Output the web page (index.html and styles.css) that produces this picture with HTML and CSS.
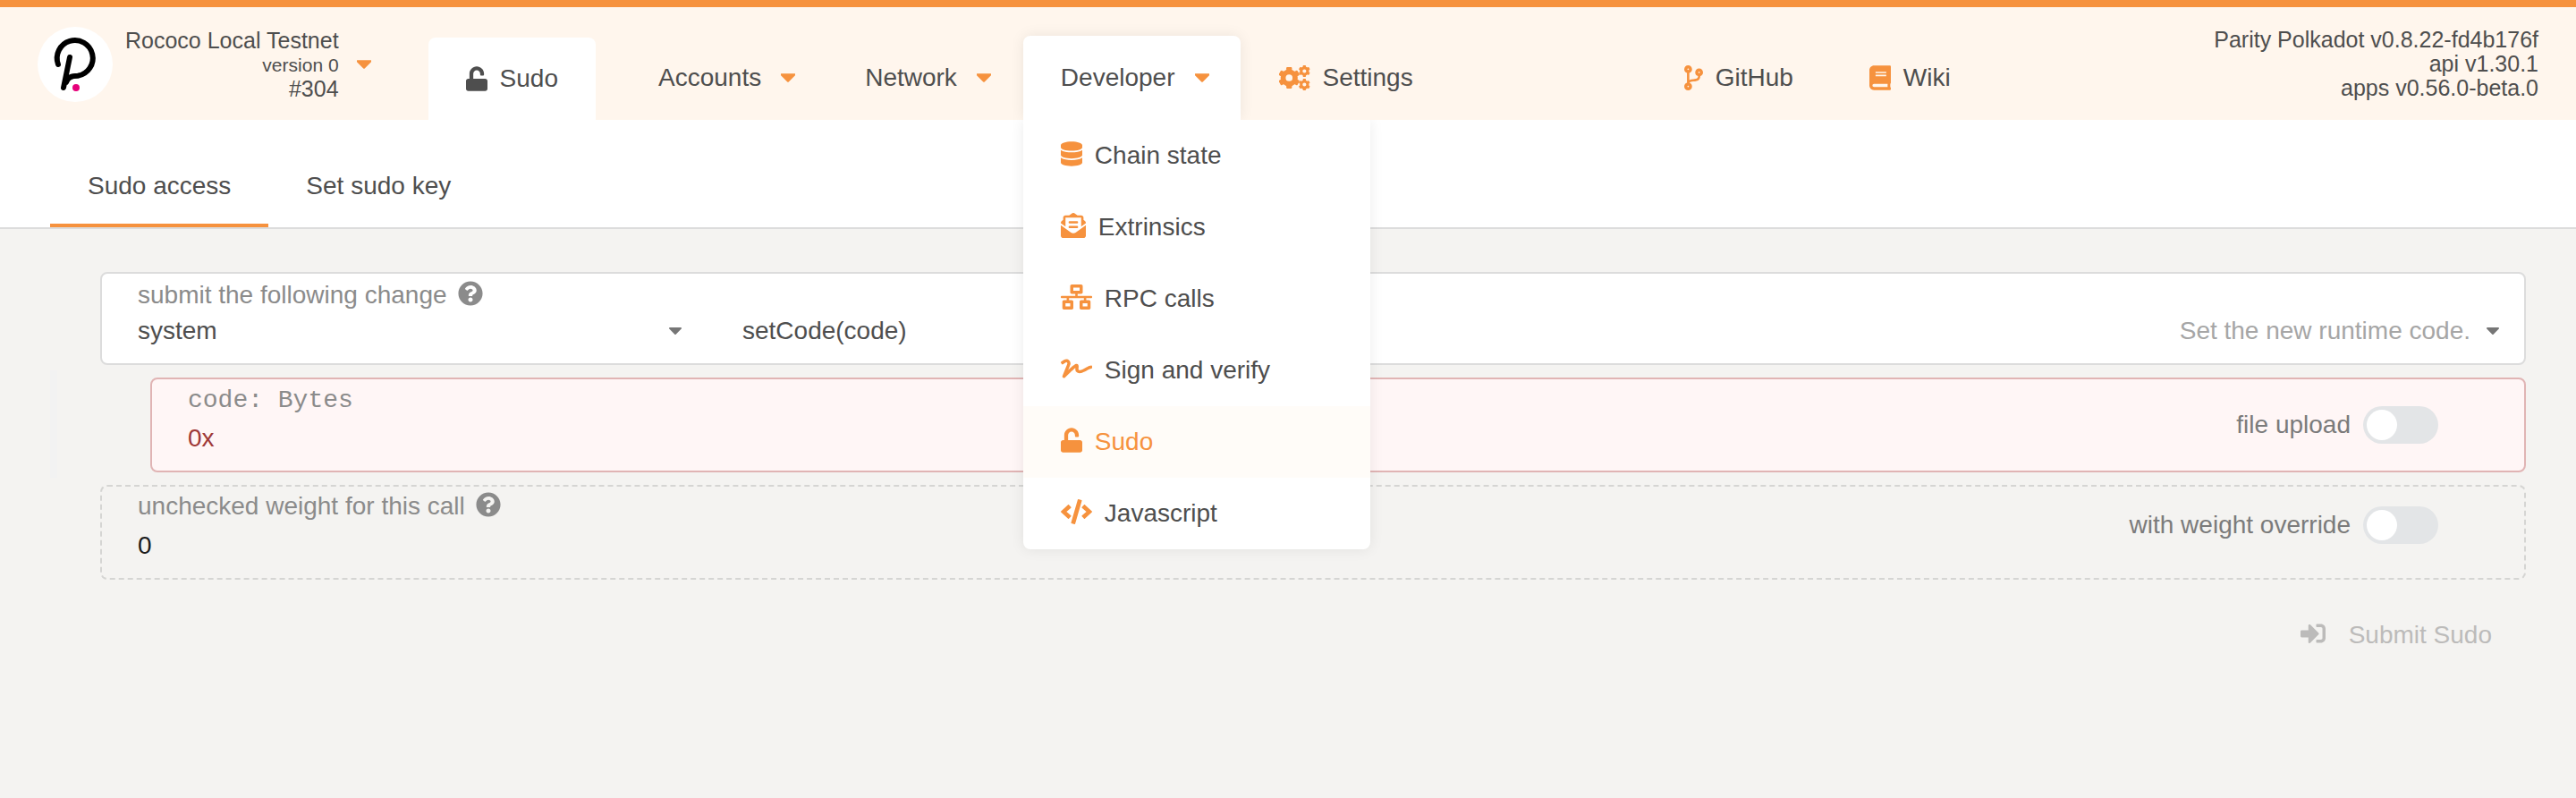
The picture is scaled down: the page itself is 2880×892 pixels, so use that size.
FILE: index.html
```html
<!DOCTYPE html>
<html lang="en">
<head>
<meta charset="utf-8">
<meta name="viewport" content="width=device-width, initial-scale=1">
<title>Sudo</title>
<link rel="stylesheet" href="styles.css">
</head>
<body>
<svg class="sprite" aria-hidden="true">
  <symbol id="i-caret" viewBox="17 192 286 169"><path d="M31.3 192h257.3c17.8 0 26.7 21.5 14.1 34.1L174.1 354.8c-7.8 7.8-20.5 7.8-28.3 0L17.2 226.1C4.6 213.5 13.5 192 31.3 192z"/></symbol>
  <symbol id="i-unlock" viewBox="0 0 448 512"><path d="M400 256H152V152.9c0-39.6 31.7-72.5 71.3-72.9 40-.4 72.7 32.1 72.7 72v16c0 13.3 10.7 24 24 24h32c13.3 0 24-10.7 24-24v-16C376 68 307.5-.3 223.5 0 139.5.3 72 69.5 72 153.5V256H48c-26.5 0-48 21.5-48 48v160c0 26.5 21.5 48 48 48h352c26.5 0 48-21.5 48-48V304c0-26.5-21.5-48-48-48z"/></symbol>
  <symbol id="i-database" viewBox="0 0 448 512"><path d="M448 73.143v45.714C448 159.143 347.667 192 224 192S0 159.143 0 118.857V73.143C0 32.857 100.333 0 224 0s224 32.857 224 73.143zM448 176v102.857C448 319.143 347.667 352 224 352S0 319.143 0 278.857V176c48.125 33.143 136.208 48.572 224 48.572S399.874 209.143 448 176zm0 160v102.857C448 479.143 347.667 512 224 512S0 479.143 0 438.857V336c48.125 33.143 136.208 48.572 224 48.572S399.874 369.143 448 336z"/></symbol>
  <symbol id="i-envelope" viewBox="0 0 512 512"><path d="M176 216h160c8.84 0 16-7.16 16-16v-16c0-8.84-7.16-16-16-16H176c-8.84 0-16 7.16-16 16v16c0 8.84 7.16 16 16 16zm-16 80c0 8.84 7.16 16 16 16h160c8.84 0 16-7.16 16-16v-16c0-8.84-7.16-16-16-16H176c-8.84 0-16 7.16-16 16v16zm96 121.13c-16.42 0-32.84-5.06-46.86-15.19L0 250.86V464c0 26.51 21.49 48 48 48h416c26.51 0 48-21.49 48-48V250.86L302.86 401.94c-14.02 10.12-30.44 15.19-46.86 15.19zm237.61-254.18c-8.85-6.94-17.24-13.47-29.61-22.81V96c0-26.51-21.49-48-48-48h-77.55c-3.04-2.2-5.87-4.26-9.04-6.56C312.6 29.17 279.2-.35 256 0c-23.2-.35-56.59 29.17-73.41 41.44-3.17 2.3-6 4.36-9.04 6.56H96c-26.51 0-48 21.49-48 48v44.14c-12.37 9.33-20.76 15.87-29.61 22.81A47.995 47.995 0 0 0 0 200.72v10.65l96 69.35V96h320v184.72l96-69.35v-10.65c0-14.74-6.78-28.67-18.39-37.77z"/></symbol>
  <symbol id="i-network" viewBox="0 0 640 512"><path d="M640 264v-16c0-8.84-7.16-16-16-16H344v-40h72c17.67 0 32-14.33 32-32V32c0-17.67-14.33-32-32-32H224c-17.67 0-32 14.33-32 32v128c0 17.67 14.33 32 32 32h72v40H16c-8.84 0-16 7.16-16 16v16c0 8.84 7.16 16 16 16h104v40H64c-17.67 0-32 14.33-32 32v128c0 17.67 14.33 32 32 32h160c17.67 0 32-14.33 32-32V352c0-17.67-14.33-32-32-32h-56v-40h304v40h-56c-17.67 0-32 14.33-32 32v128c0 17.67 14.33 32 32 32h160c17.67 0 32-14.33 32-32V352c0-17.67-14.33-32-32-32h-56v-40h104c8.84 0 16-7.16 16-16zM256 128V64h128v64H256zm-64 320H96v-64h96v64zm352 0h-96v-64h96v64z"/></symbol>
  <symbol id="i-signature" viewBox="0 0 640 512"><path d="M623.2 192c-51.8 3.5-125.7 54.7-163.1 71.5-29.1 13.1-54.2 24.4-76.1 24.4-22.6 0-26-16.2-21.3-51.9 1.1-8 11.7-79.2-42.7-76.1-25.1 1.5-64.3 24.8-169.5 126L192 182.2c30.4-75.9-53.2-151.5-129.7-102.8L7.4 116.3C0 121-2.2 130.9 2.5 138.4l17.2 27c4.7 7.5 14.6 9.7 22.1 4.9l58-38.9c18.4-11.7 40.7 7.2 32.7 27.1L34.3 404.1C27.5 421 37 448 64 448c8.3 0 16.5-3.2 22.6-9.4 42.2-42.2 154.7-150.7 211.2-195.8-2.2 28.5-2.1 58.9 20.6 83.8 15.3 16.8 37.3 25.3 65.5 25.3 35.6 0 68-14.6 102.3-30 33-14.8 99-62.6 138.4-65.8 8.5-.7 15.2-7.3 15.2-15.8v-32.1c.2-9.1-7.5-16.8-16.6-16.2z"/></symbol>
  <symbol id="i-code" viewBox="0 0 640 512"><path d="M278.9 511.5l-61-17.7c-6.4-1.8-10-8.5-8.2-14.9L346.2 8.7c1.8-6.4 8.5-10 14.9-8.2l61 17.7c6.4 1.8 10 8.5 8.2 14.9L293.8 503.3c-1.9 6.4-8.5 10.1-14.9 8.2zm-114-112.2l43.5-46.4c4.6-4.9 4.3-12.7-.8-17.2L117 256l90.6-79.7c5.1-4.5 5.5-12.3.8-17.2l-43.5-46.4c-4.5-4.8-12.1-5.1-17-.5L3.8 247.2c-5.1 4.7-5.1 12.8 0 17.5l144.1 135.1c4.9 4.6 12.5 4.4 17-.5zm327.2.6l144.1-135.1c5.1-4.7 5.1-12.8 0-17.5L492.1 112.1c-4.8-4.5-12.4-4.3-17 .5L431.6 159c-4.6 4.9-4.3 12.7.8 17.2L523 256l-90.6 79.7c-5.1 4.5-5.5 12.3-.8 17.2l43.5 46.4c4.5 4.9 12.1 5.1 17 .6z"/></symbol>
  <symbol id="i-branch" viewBox="0 0 384 512"><path d="M384 144c0-44.2-35.8-80-80-80s-80 35.8-80 80c0 36.4 24.3 67.1 57.5 76.8-.6 16.1-4.2 28.5-11 36.9-15.4 19.2-49.3 22.4-85.2 25.7-28.2 2.6-57.4 5.4-81.3 16.9v-144c32.5-10.2 56-40.5 56-76.3 0-44.2-35.8-80-80-80S0 35.8 0 80c0 35.8 23.5 66.1 56 76.3v199.3C23.5 365.9 0 396.2 0 432c0 44.2 35.8 80 80 80s80-35.8 80-80c0-34-21.2-63.1-51.2-74.6 3.1-5.2 7.8-9.8 14.9-13.4 16.2-8.2 40.4-10.4 66.1-12.8 42.2-3.9 90-8.4 118.2-43.4 14-17.4 21.1-39.8 21.6-67.9 31.6-10.8 54.4-40.7 54.4-75.9zM80 64c8.8 0 16 7.2 16 16s-7.2 16-16 16-16-7.2-16-16 7.2-16 16-16zm0 384c-8.8 0-16-7.2-16-16s7.2-16 16-16 16 7.2 16 16-7.2 16-16 16zm224-320c8.8 0 16 7.2 16 16s-7.2 16-16 16-16-7.2-16-16 7.2-16 16-16z"/></symbol>
  <symbol id="i-book" viewBox="0 0 448 512"><path d="M448 360V24c0-13.3-10.7-24-24-24H96C43 0 0 43 0 96v320c0 53 43 96 96 96h328c13.3 0 24-10.7 24-24v-16c0-7.5-3.5-14.3-8.9-18.7-4.2-15.4-4.2-59.3 0-74.7 5.4-4.3 8.9-11.1 8.9-18.6zM128 134c0-3.3 2.7-6 6-6h212c3.3 0 6 2.7 6 6v20c0 3.3-2.7 6-6 6H134c-3.3 0-6-2.7-6-6v-20zm0 64c0-3.3 2.7-6 6-6h212c3.3 0 6 2.7 6 6v20c0 3.3-2.7 6-6 6H134c-3.3 0-6-2.7-6-6v-20zm253.4 250H96c-17.7 0-32-14.3-32-32 0-17.6 14.4-32 32-32h285.4c-1.9 17.1-1.9 46.9 0 64z"/></symbol>
  <symbol id="i-help" viewBox="0 0 512 512"><path d="M504 256c0 136.997-111.043 248-248 248S8 392.997 8 256C8 119.083 119.043 8 256 8s248 111.083 248 248zM262.655 90c-54.497 0-89.255 22.957-116.549 63.758-3.536 5.286-2.353 12.415 2.715 16.258l34.699 26.31c5.205 3.947 12.621 3.008 16.665-2.122 17.864-22.658 30.113-35.797 57.303-35.797 20.429 0 45.698 13.148 45.698 32.958 0 14.976-12.363 22.667-32.534 33.976C247.128 238.528 216 254.941 216 296v4c0 6.627 5.373 12 12 12h56c6.627 0 12-5.373 12-12v-1.333c0-28.462 83.186-29.647 83.186-106.667 0-58.002-60.165-102-116.531-102zM256 338c-25.365 0-46 20.635-46 46 0 25.364 20.635 46 46 46s46-20.636 46-46c0-25.365-20.635-46-46-46z"/></symbol>
  <symbol id="i-signin" viewBox="0 0 512 512"><path d="M416 448h-84c-6.6 0-12-5.4-12-12v-40c0-6.6 5.4-12 12-12h84c17.7 0 32-14.3 32-32V160c0-17.7-14.3-32-32-32h-84c-6.6 0-12-5.4-12-12V76c0-6.6 5.4-12 12-12h84c53 0 96 43 96 96v192c0 53-43 96-96 96zm-47-201L201 79c-15-15-41-4.5-41 17v96H24c-13.3 0-24 10.7-24 24v96c0 13.3 10.7 24 24 24h136v96c0 21.5 26 32 41 17l168-168c9.3-9.4 9.3-24.6 0-34z"/></symbol>
  <symbol id="i-gear" viewBox="-100 -100 200 200">
    <circle r="56" fill="none" stroke="currentColor" stroke-width="48"/>
    <rect x="-26" y="-100" width="52" height="44" rx="10"/>
    <rect x="-26" y="-100" width="52" height="44" rx="10" transform="rotate(60)"/>
    <rect x="-26" y="-100" width="52" height="44" rx="10" transform="rotate(120)"/>
    <rect x="-26" y="-100" width="52" height="44" rx="10" transform="rotate(180)"/>
    <rect x="-26" y="-100" width="52" height="44" rx="10" transform="rotate(240)"/>
    <rect x="-26" y="-100" width="52" height="44" rx="10" transform="rotate(300)"/>
  </symbol>
  <symbol id="i-cogs" viewBox="0 0 640 512">
    <use href="#i-gear" x="-14" y="36" width="440" height="440"/>
    <use href="#i-gear" x="400" y="0" width="236" height="236"/>
    <use href="#i-gear" x="400" y="276" width="236" height="236"/>
  </symbol>
</svg>

<header class="topbar">
  <button class="brand" type="button" aria-label="Switch network">
    <svg class="brand-logo" viewBox="0 0 84 84" aria-hidden="true">
      <circle cx="42" cy="42" r="42" fill="#fff"/>
      <path d="M23 42A20 20 0 1 1 45 54.800C38 55 34 56 32 62M36 34l-7 34" fill="none" stroke="#000" stroke-width="6" stroke-linecap="round"/>
      <circle cx="43" cy="68" r="4" fill="#e6007a"/>
    </svg>
    <span class="info">
      <span>Rococo Local Testnet</span>
      <span class="info-small">version 0</span>
      <span>#304</span>
    </span>
    <svg class="caret"><use href="#i-caret"/></svg>
  </button>

  <nav class="nav" aria-label="Main">
    <a class="nav-item current" href="#sudo"><svg class="icon w-24"><use href="#i-unlock"/></svg>Sudo</a>
    <button class="nav-item has-menu" type="button">Accounts<svg class="caret"><use href="#i-caret"/></svg></button>
    <button class="nav-item has-menu" type="button">Network<svg class="caret"><use href="#i-caret"/></svg></button>
    <div class="nav-group">
      <button class="nav-item has-menu open" type="button" aria-expanded="true">Developer<svg class="caret"><use href="#i-caret"/></svg></button>
      <div class="menu">
        <a class="menu-item" href="#chainstate"><svg class="icon w-24"><use href="#i-database"/></svg>Chain state</a>
        <a class="menu-item" href="#extrinsics"><svg class="icon w-28"><use href="#i-envelope"/></svg>Extrinsics</a>
        <a class="menu-item" href="#rpc"><svg class="icon w-35"><use href="#i-network"/></svg>RPC calls</a>
        <a class="menu-item" href="#signing"><svg class="icon w-35"><use href="#i-signature"/></svg>Sign and verify</a>
        <a class="menu-item selected" href="#sudo"><svg class="icon w-24"><use href="#i-unlock"/></svg>Sudo</a>
        <a class="menu-item" href="#js"><svg class="icon w-35"><use href="#i-code"/></svg>Javascript</a>
      </div>
    </div>
    <a class="nav-item" href="#settings"><svg class="icon w-35"><use href="#i-cogs"/></svg>Settings</a>
  </nav>

  <nav class="nav external" aria-label="External">
    <a class="nav-item" href="#github"><svg class="icon w-21"><use href="#i-branch"/></svg>GitHub</a>
    <a class="nav-item" href="#wiki"><svg class="icon w-24"><use href="#i-book"/></svg>Wiki</a>
  </nav>

  <div class="info versions">
    <span>Parity Polkadot v0.8.22-fd4b176f</span>
    <span>api v1.30.1</span>
    <span>apps v0.56.0-beta.0</span>
  </div>
</header>

<nav class="tabs" aria-label="Sudo">
  <a class="tab active" href="#access">Sudo access</a>
  <a class="tab" href="#key">Set sudo key</a>
</nav>

<main class="content">
  <form>
    <section class="field solid">
      <div class="field-label"><label for="section">submit the following change</label><svg class="help"><use href="#i-help"/></svg></div>
      <div class="call">
        <div class="dropdown">
          <select id="section"><option>system</option></select>
          <svg class="caret"><use href="#i-caret"/></svg>
        </div>
        <div class="dropdown">
          <select aria-label="Call"><option>setCode(code)</option></select>
          <span class="description">Set the new runtime code.</span>
          <svg class="caret"><use href="#i-caret"/></svg>
        </div>
      </div>
    </section>

    <div class="params">
      <section class="field error">
        <div class="field-main">
          <div class="field-label mono"><label for="code">code: Bytes</label></div>
          <input class="text" id="code" type="text" value="0x">
        </div>
        <label class="switch">file upload<input type="checkbox"></label>
      </section>
    </div>

    <section class="field dashed">
      <div class="field-main">
        <div class="field-label"><label for="weight">unchecked weight for this call</label><svg class="help"><use href="#i-help"/></svg></div>
        <input class="text" id="weight" type="text" value="0">
      </div>
      <label class="switch">with weight override<input type="checkbox"></label>
    </section>

    <div class="actions">
      <button class="submit" type="submit" disabled><svg class="icon w-28"><use href="#i-signin"/></svg>Submit Sudo</button>
    </div>
  </form>
</main>
</body>
</html>
```
FILE: styles.css
```css
:root {
  --orange: #f6923e;
  --text: #4e4e4e;
}

* { box-sizing: border-box; }

body {
  margin: 0;
  min-height: 100vh;
  background: #f4f3f1;
  color: var(--text);
  font: 28px/32px "Liberation Sans", Arial, sans-serif;
}

button, input, select {
  margin: 0;
  padding: 0;
  border: 0;
  background: none;
  color: inherit;
  font: inherit;
}

a { color: inherit; text-decoration: none; }
svg { display: block; flex: none; fill: currentColor; }
.sprite { position: absolute; width: 0; height: 0; }

.icon { height: 28px; color: var(--orange); }
.w-21 { width: 21px; }
.w-24 { width: 24px; }
.w-28 { width: 28px; }
.w-35 { width: 35px; }
.caret { width: 16px; height: 10px; color: var(--orange); }

/* Header */
.topbar {
  display: flex;
  align-items: center;
  height: 134px;
  padding: 0 42px;
  border-top: 8px solid var(--orange);
  background: #fff6ed;
}

.brand {
  display: flex;
  align-items: center;
  margin-top: 2px;
}

.brand-logo { width: 84px; height: 84px; margin-right: 14px; }
.brand .caret { margin-left: 20px; }

.info {
  display: flex;
  flex-direction: column;
  align-items: flex-end;
  font-size: 25px;
  line-height: 27px;
}
.info-small { font-size: 21px; }

.nav {
  display: flex;
  align-self: stretch;
  align-items: flex-end;
  gap: 1px;
  margin-left: 64px;
}

.nav-item {
  display: flex;
  align-items: center;
  gap: 14px;
  height: 94px;
  padding: 0 42px;
  border-radius: 8px 8px 0 0;
}
.nav-item.has-menu { gap: 22px; padding-right: 35px; }
.nav-item.current {
  height: 92px;
  margin-right: 27px;
  background: #fff;
}
.nav-item.current .icon { color: inherit; }
.nav-item.open {
  background: #fff;
  box-shadow: 0 0 16px rgba(0, 0, 0, 0.08);
  clip-path: inset(-20px -20px 0 -20px);
}

.nav-group { position: relative; z-index: 1; }

.menu {
  position: absolute;
  top: 100%;
  left: 0;
  width: 388px;
  border-radius: 0 0 8px 8px;
  background: #fff;
  box-shadow: 0 0 16px rgba(0, 0, 0, 0.08);
  clip-path: inset(0 -20px -20px -20px);
}

.menu-item {
  display: flex;
  align-items: center;
  gap: 14px;
  height: 80px;
  padding: 0 42px;
}
.menu-item .icon { margin-bottom: 4px; }
.menu-item.selected { background: #fffcf8; color: var(--orange); }

.external { margin-left: 219px; }
.versions { margin-left: auto; }

/* Tabs */
.tabs {
  display: flex;
  padding: 0 56px;
  border-bottom: 2px solid #dcdcdc;
  background: #fff;
}
.tab {
  padding: 58px 42px 26px;
  border-bottom: 4px solid transparent;
}
.tab.active { border-color: var(--orange); }

/* Form */
.content { padding: 48px 56px; }

.field {
  border: 2px solid #dcdcdc;
  border-radius: 8px;
  padding: 8px 28px 20px 40px;
}
.field.solid { margin-left: 56px; background: #fff; }
.field.error {
  display: flex;
  border-color: #e0b4b4;
  background: #fff6f6;
  color: #9f3a38;
}
.field.dashed {
  display: flex;
  margin: 8px 0 0 56px;
  padding-top: 6px;
  border: 2px dashed #d5d5d3;
}

.field-main { flex: 1; }
.field-label {
  display: flex;
  gap: 12px;
  margin-bottom: 8px;
  color: #8b8b8b;
}
.error .field-label { margin-bottom: 10px; }
.dashed .field-label { margin-bottom: 12px; }
.mono { font-family: "Liberation Mono", "Courier New", monospace; }
.help { width: 28px; height: 28px; }

.text { display: block; width: 100%; height: 32px; }
.dashed .text { color: #1c1c1c; }

.call {
  display: grid;
  grid-template-columns: 608px 1fr;
  gap: 68px;
}
.dropdown {
  display: grid;
  grid-template-columns: 1fr auto 14px;
  align-items: center;
  column-gap: 18px;
}
.dropdown select {
  grid-area: 1 / 1 / 2 / 4;
  height: 32px;
  appearance: none;
}
.dropdown .description { grid-area: 1 / 2; color: #a6a6a6; pointer-events: none; }
.dropdown .caret {
  grid-area: 1 / 3;
  width: 14px;
  height: 8px;
  color: #767676;
  pointer-events: none;
}

.params {
  margin: 6px 0 0;
  padding: 8px 0 6px 104px;
  border-left: 8px solid #f2f2f2;
}

.switch {
  display: flex;
  align-items: center;
  align-self: flex-start;
  gap: 14px;
  margin: 22px 68px 0 0;
  color: #7b7b7b;
}
.dashed .switch { margin-top: 16px; }
.switch input {
  display: block;
  width: 84px;
  height: 42px;
  padding: 4px;
  border-radius: 21px;
  background: #e3e5e7;
  appearance: none;
}
.switch input::before {
  content: "";
  display: block;
  width: 34px;
  height: 34px;
  border-radius: 50%;
  background: #fff;
}

.actions {
  display: flex;
  justify-content: flex-end;
  padding: 46px 38px 0 0;
}
.submit { display: flex; gap: 26px; color: #bcbbba; }
.submit .icon { color: inherit; }
```
